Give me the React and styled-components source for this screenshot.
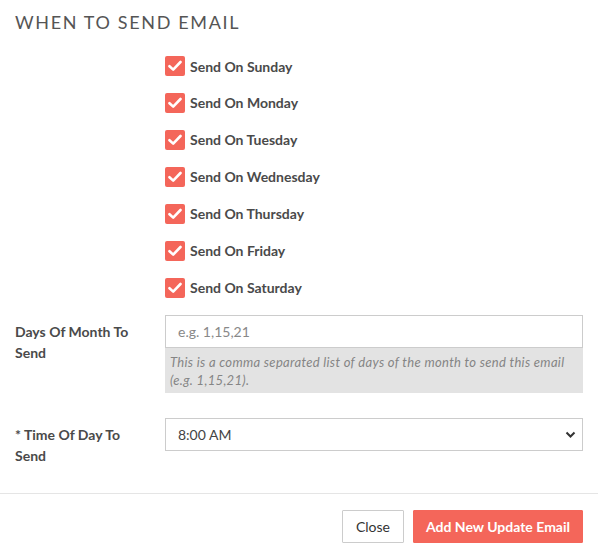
import React from 'react';
import styled, { createGlobalStyle } from 'styled-components';

const GlobalStyle = createGlobalStyle`
  body {
    margin: 0;
    background: #fff;
    font-family: Lato, "Open Sans", sans-serif;
    color: #444;
  }
`;

const Modal = styled.div`
  width: 598px;
  background: #fff;
`;

const Body = styled.div`
  padding: 10px 15px 0 15px;
`;

const Title = styled.h3`
  margin: 0 0 14px 0;
  font-size: 18px;
  line-height: 24px;
  font-weight: 400;
  letter-spacing: 1.65px;
  color: #555;
`;

const DayList = styled.div`
  display: flex;
  flex-direction: column;
  padding-left: 150px;
`;

const DayRow = styled.label`
  display: flex;
  align-items: center;
  height: 37px;
  gap: 5px;
  font-size: 14px;
  font-weight: 700;
  color: #4a4a4a;
  cursor: pointer;
  &:first-child { height: 36px; }
`;

const Box = styled.span`
  width: 20px;
  height: 20px;
  border-radius: 2px;
  background: ${p => (p.checked ? '#f4665a' : '#fff')};
  display: flex;
  align-items: center;
  justify-content: center;
`;

const FormGroup = styled.div`
  display: grid;
  grid-template-columns: 150px 1fr;
  margin-top: ${p => p.mt}px;
`;

const Label = styled.div`
  font-size: 14px;
  font-weight: 700;
  line-height: 21px;
  padding-top: 6px;
  padding-right: 20px;
  color: #4a4a4a;
`;

const Input = styled.input`
  box-sizing: border-box;
  width: 100%;
  height: 33px;
  border: 1px solid #ccc;
  padding: 0 12px;
  font-family: Lato, sans-serif;
  font-size: 14px;
  color: #555;
  outline: none;
  &::placeholder { color: #888; }
`;

const Help = styled.div`
  background: #e3e3e3;
  padding: 5px 5px 4px 5px;
  font-size: 13px;
  letter-spacing: 0.32px;
  line-height: 18px;
  font-style: italic;
  color: #858585;
  min-height: 35px;
`;

const SelectWrap = styled.div`
  position: relative;
  height: 33px;
  border: 1px solid #ccc;
  box-sizing: border-box;
  display: flex;
  align-items: center;
  padding: 0 12px;
  font-size: 14px;
  color: #444;
  svg {
    position: absolute;
    right: 6px;
    top: 11px;
  }
`;

const Footer = styled.div`
  margin-top: 27px;
  border-top: 1px solid #e5e5e5;
  padding: 16px 15px 16px 15px;
  display: flex;
  justify-content: flex-end;
  gap: 9px;
`;

const Button = styled.button`
  height: 33px;
  padding: 0 12px;
  font-family: Lato, sans-serif;
  font-size: 14px;
  border-radius: 1px;
  cursor: pointer;
  border: 1px solid ${p => (p.primary ? '#f4665a' : '#ccc')};
  background: ${p => (p.primary ? '#f4665a' : '#fff')};
  color: ${p => (p.primary ? '#fff' : '#333')};
  font-weight: ${p => (p.primary ? 700 : 400)};
  min-width: ${p => (p.primary ? 169 : 62)}px;
`;

const days = ['Sunday', 'Monday', 'Tuesday', 'Wednesday', 'Thursday', 'Friday', 'Saturday'];

const Check = () => (
  <svg width="14" height="12" viewBox="0 0 14 12">
    <path d="M1.5 6.2 L5.2 9.6 L12.5 2" fill="none" stroke="#fff" strokeWidth="2.6" strokeLinecap="round" strokeLinejoin="round" />
  </svg>
);

export default function App() {
  return (
    <Modal>
      <GlobalStyle />
      <Body>
        <Title>WHEN TO SEND EMAIL</Title>
        <DayList>
          {days.map(day => (
            <DayRow key={day}>
              <Box checked><Check /></Box>
              Send On {day}
            </DayRow>
          ))}
        </DayList>
        <FormGroup mt={9}>
          <Label>Days Of Month To Send</Label>
          <div>
            <Input placeholder="e.g. 1,15,21" />
            <Help>This is a comma separated list of days of the month to send this email (e.g. 1,15,21).</Help>
          </div>
        </FormGroup>
        <FormGroup mt={25}>
          <Label>* Time Of Day To Send</Label>
          <SelectWrap>
            8:00 AM
            <svg width="11" height="9" viewBox="0 0 11 9">
              <path d="M1.5 2.5 L5.5 6.5 L9.5 2.5" fill="none" stroke="#333" strokeWidth="2" />
            </svg>
          </SelectWrap>
        </FormGroup>
      </Body>
      <Footer>
        <Button>Close</Button>
        <Button primary>Add New Update Email</Button>
      </Footer>
    </Modal>
  );
}
